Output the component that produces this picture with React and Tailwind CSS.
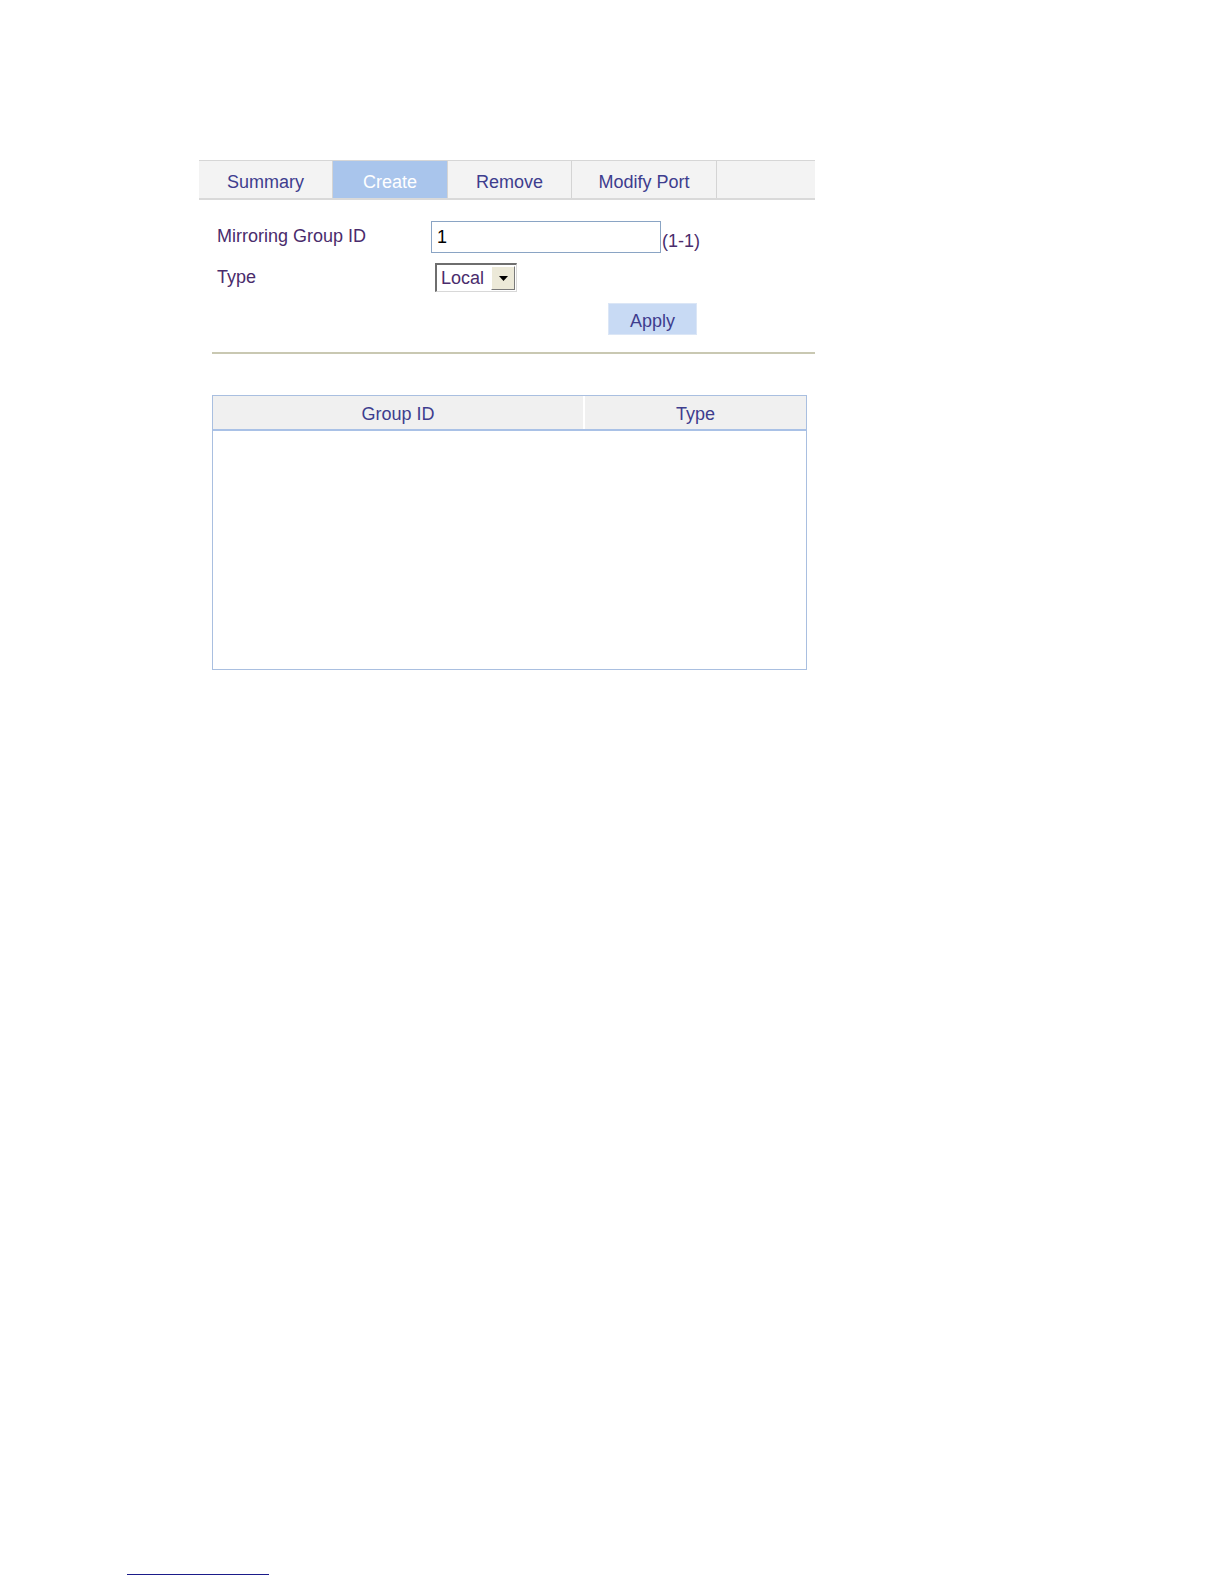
import React from "react";

const font = { fontFamily: '"Liberation Sans", Arial, sans-serif' };

function Tab({ label, w, active }) {
  return (
    <div
      className={`flex items-center justify-center h-full pt-[6px] border-r border-[#d4d4d4] text-[18px] ${
        active ? "bg-[#a9c5ec] text-white" : "bg-[#f3f3f3] text-[#3e3d8e]"
      } ${w}`}
    >
      {label}
    </div>
  );
}

export default function App() {
  return (
    <div className="w-[1224px] h-[1584px] bg-white flex flex-col" style={font}>
      <div className="pt-[160px] pl-[199px] flex flex-col">
        {/* Tabs */}
        <div className="flex w-[616px] h-[40px] border-t border-t-[#d6d6d6] border-b-2 border-b-[#d9d9d9]">
          <Tab label="Summary" w="w-[134px]" />
          <Tab label="Create" w="w-[115px]" active />
          <Tab label="Remove" w="w-[124px]" />
          <Tab label="Modify Port" w="w-[145px]" />
          <div className="flex-1 h-full bg-[#f3f3f3]" />
        </div>

        {/* Form */}
        <div className="flex flex-col pl-[18px] pt-[21px]">
          <div className="flex items-center h-[32px]">
            <div className="w-[214px] text-[18px] text-[#4a2c6c] -mt-[1px]">Mirroring Group ID</div>
            <div className="w-[230px] h-[32px] border border-[#8aa4c4] bg-white flex items-center pl-[5px] text-[18px] text-black">
              1
            </div>
            <div className="text-[18px] text-[#4a2c6c] ml-[1px] mt-[8px]">(1-1)</div>
          </div>
          <div className="flex items-center h-[29px] mt-[10px]">
            <div className="w-[218px] text-[18px] text-[#4a2c6c] -mt-[1px]">Type</div>
            <div className="w-[82px] h-[29px] flex items-stretch border-l-2 border-t-2 border-l-[#6e6e6e] border-t-[#6e6e6e] border-r border-b border-r-[#d8d8d8] border-b-[#d8d8d8] bg-white">
              <div className="flex-1 flex items-center pl-[4px] text-[18px] text-[#4a2c6c]">Local</div>
              <div className="w-[24px] my-[1px] mr-[1px] bg-[#ece9d8] border border-t-white border-l-white border-r-[#7a7a7a] border-b-[#7a7a7a] flex items-center justify-center">
                <svg width="9" height="5" viewBox="0 0 9 5">
                  <path d="M0 0 L9 0 L4.5 5 Z" fill="#000" />
                </svg>
              </div>
            </div>
          </div>
          <div className="flex h-[32px] mt-[11px] pl-[391px]">
            <div className="w-[89px] h-[32px] bg-[#c8daf4] border border-[#dbe6f6] flex items-center justify-center text-[18px] text-[#3e3d8e] pt-[4px]">
              Apply
            </div>
          </div>
        </div>

        {/* Separator */}
        <div className="ml-[13px] mt-[17px] w-[603px] h-[2px] bg-[#c9c8b2]" />

        {/* Table */}
        <div className="ml-[13px] mt-[41px] w-[595px] h-[275px] border border-[#a9bfe0] flex flex-col">
          <div className="flex h-[35px] bg-[#f0f0f0] border-b-2 border-b-[#a9c1e6] text-[18px] text-[#3e3d8e]">
            <div className="w-[372px] flex items-center justify-center border-r-2 border-r-white pt-[3px]">Group ID</div>
            <div className="flex-1 flex items-center justify-center pt-[3px]">Type</div>
          </div>
          <div className="flex-1 bg-white" />
        </div>
      </div>

      {/* Footer rule */}
      <div className="ml-[127px] mt-[904px] w-[142px] h-[1px] bg-[#1b1b8a]" />
    </div>
  );
}
